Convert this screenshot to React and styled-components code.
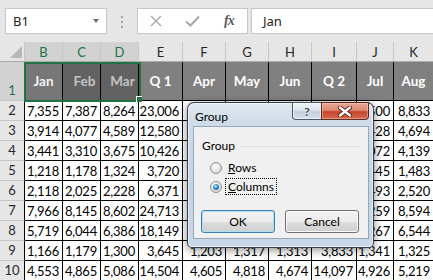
import React from "react";
import styled, { createGlobalStyle } from "styled-components";

const GlobalStyle = createGlobalStyle`
  body {
    margin: 0;
    background: #fff;
    font-family: "Lato", "Liberation Sans", sans-serif;
  }
`;

const Screen = styled.div`
  position: relative;
  width: 433px;
  height: 280px;
  overflow: hidden;
  background: #e6e6e6;
`;

const FormulaBar = styled.div`
  display: flex;
  align-items: flex-start;
  height: 42px;
  padding: 8px 0 0 5px;
  box-sizing: border-box;
  font-family: "Noto Sans", "Lato", sans-serif;
  font-size: 13px;
  color: #222;
`;

const NameBox = styled.div`
  display: flex;
  align-items: center;
  justify-content: space-between;
  width: 102px;
  height: 26px;
  box-sizing: border-box;
  padding: 0 7px 0 7px;
  border: 1px solid #c6c6c6;
  background: #fff;
`;

const Caret = styled.span`
  width: 0;
  height: 0;
  border-left: 3.5px solid transparent;
  border-right: 3.5px solid transparent;
  border-top: 4px solid #6f6f6f;
`;

const Dots = styled.div`
  display: flex;
  flex-direction: column;
  align-items: center;
  gap: 3px;
  width: 30px;
  margin-top: 8px;

  span {
    width: 2px;
    height: 2px;
    background: #a3a3a3;
  }
`;

const FxBox = styled.div`
  display: grid;
  grid-template-columns: repeat(3, 1fr);
  align-items: center;
  justify-items: center;
  width: 111px;
  height: 26px;
  box-sizing: border-box;
  border: 1px solid #c6c6c6;
  background: #fff;
`;

const FxLabel = styled.span`
  font-family: "Liberation Serif", serif;
  font-style: italic;
  font-weight: bold;
  font-size: 14px;
  color: #5a5a5a;
  letter-spacing: -1px;
`;

const FormulaInput = styled.div`
  flex: 1;
  display: flex;
  align-items: center;
  height: 26px;
  margin: 0 -2px 0 3px;
  padding-left: 11px;
  box-sizing: border-box;
  border: 1px solid #c6c6c6;
  background: #fff;
`;

const Sheet = styled.div`
  position: relative;
  display: grid;
  grid-template-columns: 25px 38px 38px 38px 44px 43px 43px 43px 45px 37px 40px;
  grid-template-rows: 20px 39px repeat(9, 20px);
  background: #fff;
  font-size: 13px;
`;

const Corner = styled.div`
  display: flex;
  align-items: flex-end;
  justify-content: flex-end;
  padding: 0 2px 3px 0;
  border-right: 1px solid #c6c6c6;
  border-bottom: 1px solid #ababab;
  background: #e6e6e6;

  &::after {
    content: "";
    width: 12px;
    height: 12px;
    background: #b7b7b7;
    clip-path: polygon(100% 0, 100% 100%, 0 100%);
  }
`;

const ColHead = styled.div`
  display: flex;
  align-items: center;
  justify-content: center;
  border-right: 1px solid #c6c6c6;
  border-bottom: 1px solid #ababab;
  background: ${(p) => (p.$selected ? "#d2d2d2" : "#e6e6e6")};
  color: ${(p) => (p.$selected ? "#217346" : "#262626")};
  font-size: 13px;
  padding-top: 1px;
`;

const RowHead = styled.div`
  display: flex;
  align-items: flex-end;
  justify-content: center;
  padding-bottom: 1px;
  line-height: 17px;
  border-right: 1px solid #000;
  border-bottom: 1px solid #c6c6c6;
  background: ${(p) => (p.$selected ? "#d2d2d2" : "#e6e6e6")};
  color: ${(p) => (p.$selected ? "#217346" : "#262626")};
`;

const titleTones = {
  active: { bg: "#777777", fg: "#f4f4f4" },
  dim: { bg: "#626262", fg: "#c4c4c4" },
  normal: { bg: "#808080", fg: "#ffffff" },
};

const TitleCell = styled.div`
  display: flex;
  align-items: center;
  justify-content: center;
  padding-left: ${(p) => (p.$tone === "dim" ? "6px" : "0")};
  border-right: 1px solid #000;
  border-bottom: 1px solid #000;
  background: ${(p) => titleTones[p.$tone].bg};
  color: ${(p) => titleTones[p.$tone].fg};
  font-weight: bold;
  font-size: 13.5px;
`;

const NumCell = styled.div`
  padding: 2px 3px 0 0;
  line-height: 17px;
  text-align: right;
  white-space: nowrap;
  letter-spacing: -0.2px;
  color: #000;
  border-right: 1px solid #000;
  border-bottom: 1px solid #000;
`;

const Selection = styled.div`
  position: absolute;
  left: 24px;
  top: 20px;
  width: 117px;
  height: 40px;
  box-sizing: border-box;
  border: 2px solid #217346;
  pointer-events: none;
`;

const FillHandle = styled.div`
  position: absolute;
  left: 110px;
  top: 32px;
  width: 5px;
  height: 5px;
  background: #217346;
  border-left: 1px solid #fff;
  border-top: 1px solid #fff;
`;

const Dialog = styled.div`
  position: absolute;
  left: 187px;
  top: 102px;
  width: 187px;
  height: 146px;
  box-sizing: border-box;
  display: flex;
  flex-direction: column;
  padding: 0 4px 8px 5px;
  border: 1px solid rgba(28, 36, 48, 0.85);
  border-radius: 7px 7px 5px 5px;
  background: linear-gradient(
    180deg,
    #e2eaf2 0px,
    #cedbe8 20px,
    #c4d3e3 60%,
    #cbd8e6 100%
  );
  box-shadow: 0 2px 10px rgba(0, 0, 0, 0.45),
    inset 0 0 0 1px rgba(255, 255, 255, 0.55);
  font-size: 12px;
  color: #000;
`;

const TitleBar = styled.div`
  display: flex;
  align-items: flex-start;
  height: 23px;
`;

const TitleText = styled.div`
  flex: 1;
  padding: 6px 0 0 2px;
  line-height: 16px;
`;

const CaptionButtons = styled.div`
  display: flex;
  margin-top: -1px;
`;

const HelpButton = styled.div`
  display: flex;
  align-items: center;
  justify-content: center;
  width: 29px;
  height: 18px;
  box-sizing: border-box;
  border: 1px solid rgba(38, 50, 68, 0.8);
  border-right: none;
  border-radius: 0 0 0 4px;
  background: linear-gradient(180deg, #eef3f8 0%, #dbe4ee 45%, #c3d0de 55%, #d3dee9 100%);
  box-shadow: inset 0 0 0 1px rgba(255, 255, 255, 0.6);
  font-weight: bold;
  font-size: 12px;
  color: #3a3f46;
  text-shadow: 0 1px 0 #fff;
`;

const CloseButton = styled.div`
  display: flex;
  align-items: center;
  justify-content: center;
  width: 48px;
  height: 18px;
  box-sizing: border-box;
  border: 1px solid rgba(70, 24, 16, 0.85);
  border-radius: 0 0 4px 0;
  background: linear-gradient(180deg, #e8a796 0%, #dd8a72 45%, #c6452c 55%, #d3694c 100%);
  box-shadow: inset 0 0 0 1px rgba(255, 210, 200, 0.45);
`;

const Client = styled.div`
  flex: 1;
  display: flex;
  flex-direction: column;
  box-sizing: border-box;
  border: 1px solid #94a6ba;
  background: #f0f0f0;
`;

const GroupHeader = styled.div`
  display: flex;
  align-items: center;
  margin-top: 11px;
  padding: 0 8px;
  line-height: 16px;

  &::after {
    content: "";
    flex: 1;
    height: 1px;
    margin-left: 5px;
    background: #d5dfe5;
  }
`;

const RadioList = styled.div`
  display: flex;
  flex-direction: column;
  gap: 2px;
  margin-top: 5px;
  padding-left: 16px;
`;

const RadioRow = styled.div`
  display: flex;
  align-items: center;
  gap: 3px;
  height: 17px;
`;

const RadioCircle = styled.span`
  display: flex;
  align-items: center;
  justify-content: center;
  width: 12px;
  height: 12px;
  box-sizing: border-box;
  border-radius: 50%;
  border: 1px solid #8c8f92;
  background: radial-gradient(circle at 40% 35%, #ffffff 0%, #e4e4e4 55%, #cdcdcd 100%);

  &::after {
    content: "";
    display: ${(p) => (p.$checked ? "block" : "none")};
    width: 6px;
    height: 6px;
    border-radius: 50%;
    background: radial-gradient(circle at 40% 35%, #b4e6ff 0%, #2f86c8 50%, #0c3f7c 100%);
  }
`;

const RadioLabel = styled.span`
  padding: 1px 2px;
  line-height: 13px;
  border: 1px dotted ${(p) => (p.$focused ? "#000" : "transparent")};
`;

const ButtonRow = styled.div`
  display: flex;
  gap: 10px;
  margin-top: 15px;
  padding-left: 7px;
`;

const DialogButton = styled.div`
  display: flex;
  align-items: center;
  justify-content: center;
  width: 74px;
  height: 23px;
  box-sizing: border-box;
  border-radius: 3px;
  border: 1px solid ${(p) => (p.$default ? "#3c7fb1" : "#707070")};
  background: linear-gradient(180deg, #f2f2f2 0%, #ebebeb 50%, #dddddd 52%, #cfcfcf 100%);
  box-shadow: inset 0 0 0 1px ${(p) => (p.$default ? "#aee0f8" : "#fbfbfb")};
`;

const columns = ["B", "C", "D", "E", "F", "G", "H", "I", "J", "K"];

const titles = [
  ["Jan", "active"],
  ["Feb", "dim"],
  ["Mar", "dim"],
  ["Q 1", "normal"],
  ["Apr", "normal"],
  ["May", "normal"],
  ["Jun", "normal"],
  ["Q 2", "normal"],
  ["Jul", "normal"],
  ["Aug", "normal"],
];

const rows = [
  ["7,355", "7,387", "8,264", "23,006", "7,716", "7,990", "8,049", "23,755", "8,500", "8,833"],
  ["3,914", "4,077", "4,589", "12,580", "4,205", "4,313", "4,561", "13,079", "4,428", "4,694"],
  ["3,441", "3,310", "3,675", "10,426", "3,812", "3,904", "3,695", "11,411", "4,072", "4,139"],
  ["1,218", "1,178", "1,324", "3,720", "1,367", "1,290", "1,402", "4,059", "1,445", "1,483"],
  ["2,118", "2,025", "2,228", "6,371", "2,310", "2,402", "2,387", "7,099", "2,493", "2,520"],
  ["7,966", "8,145", "8,602", "24,713", "8,077", "8,311", "8,165", "24,553", "8,259", "8,594"],
  ["5,719", "6,044", "6,386", "18,149", "6,104", "6,228", "6,131", "18,463", "6,267", "6,544"],
  ["1,166", "1,179", "1,300", "3,645", "1,203", "1,317", "1,313", "3,833", "1,341", "1,325"],
  ["4,553", "4,865", "5,086", "14,504", "4,605", "4,818", "4,674", "14,097", "4,926", "5,219"],
];

function CancelIcon() {
  return (
    <svg width="12" height="12" viewBox="0 0 12 12">
      <path d="M1 1 L11 11 M11 1 L1 11" stroke="#a8a8a8" strokeWidth="1.4" fill="none" />
    </svg>
  );
}

function EnterIcon() {
  return (
    <svg width="15" height="12" viewBox="0 0 15 12">
      <path d="M1 6.5 L5.5 10.5 L14 1.5" stroke="#a8a8a8" strokeWidth="2" fill="none" />
    </svg>
  );
}

function CloseGlyph() {
  return (
    <svg width="14" height="11" viewBox="0 0 14 11">
      <path d="M2 1.5 L12 9.5 M12 1.5 L2 9.5" stroke="#5a1d12" strokeWidth="4.2" strokeLinecap="round" fill="none" />
      <path d="M2 1.5 L12 9.5 M12 1.5 L2 9.5" stroke="#ffffff" strokeWidth="2.4" strokeLinecap="round" fill="none" />
    </svg>
  );
}

export default function App() {
  return (
    <Screen>
      <GlobalStyle />
      <FormulaBar>
        <NameBox>
          <span>B1</span>
          <Caret />
        </NameBox>
        <Dots>
          <span />
          <span />
          <span />
        </Dots>
        <FxBox>
          <CancelIcon />
          <EnterIcon />
          <FxLabel>fx</FxLabel>
        </FxBox>
        <FormulaInput>Jan</FormulaInput>
      </FormulaBar>

      <Sheet>
        <Corner />
        {columns.map((c, i) => (
          <ColHead key={c} $selected={i < 3}>
            {c}
          </ColHead>
        ))}
        <RowHead $selected>1</RowHead>
        {titles.map(([t, tone]) => (
          <TitleCell key={t} $tone={tone}>
            {t}
          </TitleCell>
        ))}
        {rows.map((r, ri) => (
          <React.Fragment key={ri}>
            <RowHead>{ri + 2}</RowHead>
            {r.map((v, ci) => (
              <NumCell key={ci}>{v}</NumCell>
            ))}
          </React.Fragment>
        ))}
        <Selection>
          <FillHandle />
        </Selection>
      </Sheet>

      <Dialog>
        <TitleBar>
          <TitleText>Group</TitleText>
          <CaptionButtons>
            <HelpButton>?</HelpButton>
            <CloseButton>
              <CloseGlyph />
            </CloseButton>
          </CaptionButtons>
        </TitleBar>
        <Client>
          <GroupHeader>Group</GroupHeader>
          <RadioList>
            <RadioRow>
              <RadioCircle />
              <RadioLabel>
                <u>R</u>ows
              </RadioLabel>
            </RadioRow>
            <RadioRow>
              <RadioCircle $checked />
              <RadioLabel $focused>
                <u>C</u>olumns
              </RadioLabel>
            </RadioRow>
          </RadioList>
          <ButtonRow>
            <DialogButton $default>OK</DialogButton>
            <DialogButton>Cancel</DialogButton>
          </ButtonRow>
        </Client>
      </Dialog>
    </Screen>
  );
}
